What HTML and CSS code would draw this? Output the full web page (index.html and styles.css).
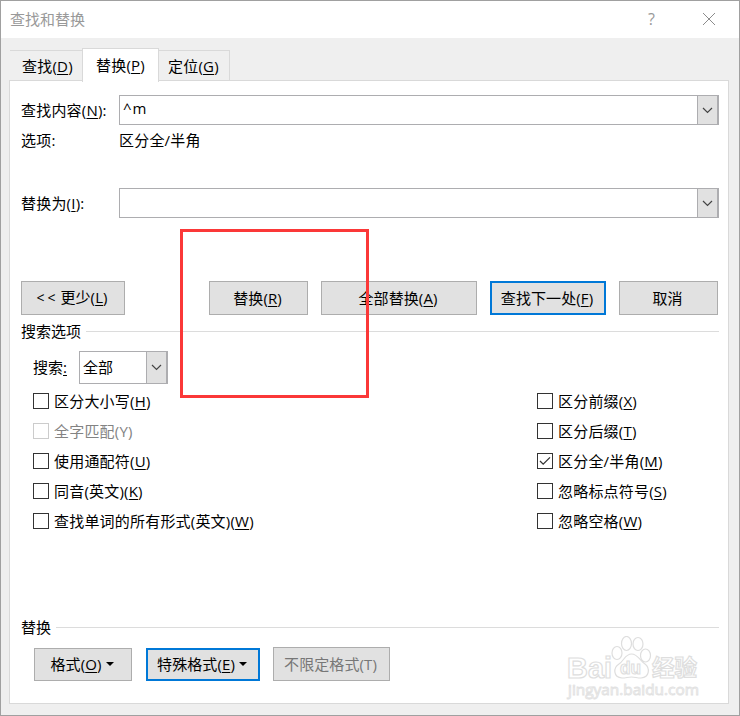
FILE: index.html
```html
<!DOCTYPE html>
<html lang="zh-CN">
<head>
<meta charset="utf-8">
<title>查找和替换</title>
<link rel="stylesheet" href="styles.css">
</head>
<body>
<div class="window">
  <header class="titlebar">
    <span class="title">查找和替换</span>
    <span class="help">?</span>
    <svg class="close" width="14" height="14" viewBox="0 0 14 14"><path d="M1 1L13 13M13 1L1 13"/></svg>
  </header>
  <nav class="tabs">
    <div class="tab first">查找(<u>D</u>)</div>
    <div class="tab active">替换(<u>P</u>)</div>
    <div class="tab last">定位(<u>G</u>)</div>
  </nav>
  <main class="panel">
    <div class="field">
      <label>查找内容(<u>N</u>):</label>
      <div class="combo"><span class="value caret">^m</span><span class="drop"><svg width="11" height="7" viewBox="0 0 11 7"><path d="M1 1L5.5 5.5L10 1"/></svg></span></div>
    </div>
    <div class="field info"><label>选项:</label><span>区分全/半角</span></div>
    <div class="field second">
      <label>替换为(<u>I</u>):</label>
      <div class="combo"><span class="value"></span><span class="drop"><svg width="11" height="7" viewBox="0 0 11 7"><path d="M1 1L5.5 5.5L10 1"/></svg></span></div>
    </div>
    <div class="actions">
      <button class="btn less"><span class="wide">&lt;&lt;</span> 更少(<u>L</u>)</button>
      <button class="btn replace">替换(<u>R</u>)</button>
      <button class="btn all">全部替换(<u>A</u>)</button>
      <button class="btn next primary">查找下一处(<u>F</u>)</button>
      <button class="btn cancel">取消</button>
    </div>
    <div class="legend">搜索选项</div>
    <div class="search">
      <label>搜索<u>:</u></label>
      <div class="combo"><span class="value">全部</span><span class="drop"><svg width="11" height="7" viewBox="0 0 11 7"><path d="M1 1L5.5 5.5L10 1"/></svg></span></div>
    </div>
    <div class="options">
      <div class="column">
        <div class="check"><i class="box"></i><span>区分大小写(<u>H</u>)</span></div>
        <div class="check disabled"><i class="box"></i><span>全字匹配(Y)</span></div>
        <div class="check"><i class="box"></i><span>使用通配符(<u>U</u>)</span></div>
        <div class="check"><i class="box"></i><span>同音(英文)(<u>K</u>)</span></div>
        <div class="check"><i class="box"></i><span>查找单词的所有形式(英文)(<u>W</u>)</span></div>
      </div>
      <div class="column">
        <div class="check"><i class="box"></i><span>区分前缀(<u>X</u>)</span></div>
        <div class="check"><i class="box"></i><span>区分后缀(<u>T</u>)</span></div>
        <div class="check"><i class="box"><svg width="14" height="14" viewBox="0 0 14 14"><path d="M2 7L5.2 10.2L12 3.4"/></svg></i><span>区分全/半角(<u>M</u>)</span></div>
        <div class="check"><i class="box"></i><span>忽略标点符号(<u>S</u>)</span></div>
        <div class="check"><i class="box"></i><span>忽略空格(<u>W</u>)</span></div>
      </div>
    </div>
    <div class="legend">替换</div>
    <div class="formats">
      <button class="btn format">格式(<u>O</u>)<i class="arrow"></i></button>
      <button class="btn special primary">特殊格式(<u>E</u>)<i class="arrow"></i></button>
      <button class="btn nofmt">不限定格式(T)</button>
    </div>
  </main>
  <div class="highlight"></div>
  <svg class="watermark" width="150" height="70" viewBox="0 0 150 70">
    <g class="mark">
      <text class="brand" x="7" y="42" textLength="45" lengthAdjust="spacingAndGlyphs">Bai</text>
      <ellipse cx="57" cy="17" rx="5" ry="6.5"/>
      <ellipse cx="66.500" cy="7.500" rx="5" ry="7"/>
      <ellipse cx="78" cy="8" rx="5" ry="6.500"/>
      <ellipse cx="85.500" cy="19.500" rx="5" ry="6.500"/>
      <path d="M71.500 18C65 18 64 25 59 28C53 32 53 41 62 42C66 42 68 41 71.500 41C75 41 77 42 81 42C90 41 90 32 85 28C80 25 78 18 71.500 18Z"/>
      <text class="du" x="60" y="38" textLength="21" lengthAdjust="spacingAndGlyphs">du</text>
      <text class="cn" x="92" y="40" textLength="45" lengthAdjust="spacingAndGlyphs">经验</text>
      <text class="url" x="8" y="59" textLength="131" lengthAdjust="spacingAndGlyphs">jingyan.baidu.com</text>
    </g>
  </svg>
</div>
</body>
</html>
```
FILE: styles.css
```css
* { box-sizing: border-box; }
body {
  margin: 0;
  font: 15px/20px "Open Sans", "Noto Sans CJK SC", sans-serif;
  color: #000;
}
.window {
  position: relative;
  width: 740px;
  height: 716px;
  border: 1px solid #a0a0a0;
  background: #efefef;
  overflow: hidden;
  white-space: nowrap;
}
u {
  text-decoration: underline 1px;
  text-underline-offset: 2px;
  text-decoration-skip-ink: none;
}
.titlebar {
  display: flex;
  align-items: center;
  height: 37px;
  padding: 0 23px 2px 9px;
  background: #fff;
  color: #999;
}
.title { flex: 1; }
.help { width: 8px; margin-right: 46px; font-size: 16px; }
.close { fill: none; stroke: #8c8c8c; stroke-width: 1; }

.tabs {
  display: flex;
  align-items: flex-end;
  height: 43px;
  padding-left: 9px;
}
.tab {
  height: 31px;
  width: 72px;
  padding: 5px 0 0 9px;
  border: 1px solid #d9d9d9;
  border-width: 1px 1px 0 0;
  letter-spacing: .2px;
}
.tab.first { padding-left: 12px; border-right: 0; }
.tab.last { width: 71px; }
.tab.active {
  position: relative;
  width: 77px;
  height: 34px;
  margin-bottom: -1px;
  padding: 6px 0 0 13px;
  border-left-width: 1px;
  background: #fff;
}
.panel {
  width: 720px;
  height: 624px;
  margin: -1px 0 0 8px;
  padding: 14px 9px 0 11px;
  border: 1px solid #d9d9d9;
  background: #fff;
}
.field { display: flex; align-items: center; height: 30px; letter-spacing: .2px; }
.field label { width: 98px; }
.field.info { height: 20px; margin-top: 5px; }
.field.second { margin-top: 38px; }
.field .combo { flex: 1; height: 30px; }
.combo { display: flex; border: 1px solid #adadb0; background: #fff; }
.value { flex: 1; padding: 4px 0 0 3px; }
.caret { padding-top: 2px; letter-spacing: .8px; }
.drop {
  display: flex;
  align-items: center;
  justify-content: center;
  width: 21px;
  border: 1px solid #adadb0;
  border-width: 0 1px 0 1px;
  background: #e1e1e1;
}
.drop svg { fill: none; stroke: #444; stroke-width: 1.2; }
.btn {
  height: 34px;
  padding: 0 2px 0 0;
  border: 1px solid #adadad;
  border-radius: 0;
  background: #e1e1e1;
  color: #000;
  font: inherit;
  letter-spacing: .1px;
}
.primary { border: 2px solid #0078d7; }
.wide { letter-spacing: 3px; margin-right: -2px; font-size: 14px; }
.actions { display: flex; margin-top: 63px; }
.actions .btn { padding-bottom: 1px; }
.less { width: 104px; margin-right: 84px; }
.replace { width: 99px; margin-right: 13px; }
.all { width: 156px; margin-right: 13px; }
.next { width: 116px; margin-right: 13px; }
.cancel { width: 99px; }
.legend { display: flex; align-items: center; height: 20px; margin-top: 6px; }
.legend::after {
  content: "";
  flex: 1;
  height: 1px;
  margin: 1px 0 0 5px;
  background: #dcdcdc;
}
.search { display: flex; align-items: center; margin: 10px 0 0 12px; }
.search label { width: 46px; padding-bottom: 1px; }
.search .combo { width: 89px; height: 33px; }
.search .value { padding-top: 5px; }
.options { display: flex; margin: 2px 0 0 12px; letter-spacing: .2px; }
.column { width: 504px; }
.column + .column { width: 180px; }
.check { display: flex; align-items: center; height: 30px; gap: 5px; }
.box { width: 16px; height: 16px; border: 1px solid #333; }
.box svg { display: block; fill: none; stroke: #333; stroke-width: 1.3; }
.disabled { color: #838383; }
.disabled .box { border-color: #ccc; }
.options + .legend { margin-top: 81px; }
.formats { display: flex; align-items: flex-end; height: 34px; margin: 10px 0 0 13px; }
.formats .btn { height: 33px; padding-bottom: 1px; }
.format { width: 98px; margin-right: 14px; }
.special { width: 114px; margin-right: 13px; }
.formats .nofmt { width: 117px; height: 34px; color: #777; }
.arrow {
  display: inline-block;
  margin-left: 4px;
  vertical-align: 4px;
  border: 4px solid transparent;
  border-top-color: #000;
  border-bottom: 0;
}
.highlight {
  position: absolute;
  left: 179px;
  top: 228px;
  width: 189px;
  height: 169px;
  border: 3px solid #fb3838;
}
.watermark { position: absolute; left: 559px; top: 635px; }
.mark { fill: #fff; stroke: #dedede; stroke-width: 1.2; }
.brand { font: bold 30px "Liberation Sans", sans-serif; }
.du { font: bold 19px "Liberation Sans", sans-serif; }
.cn { font: bold 23px "Noto Sans CJK SC", sans-serif; }
.url { font: 15px "Open Sans", sans-serif; stroke: #e2e2e2; stroke-width: .9; }
```
